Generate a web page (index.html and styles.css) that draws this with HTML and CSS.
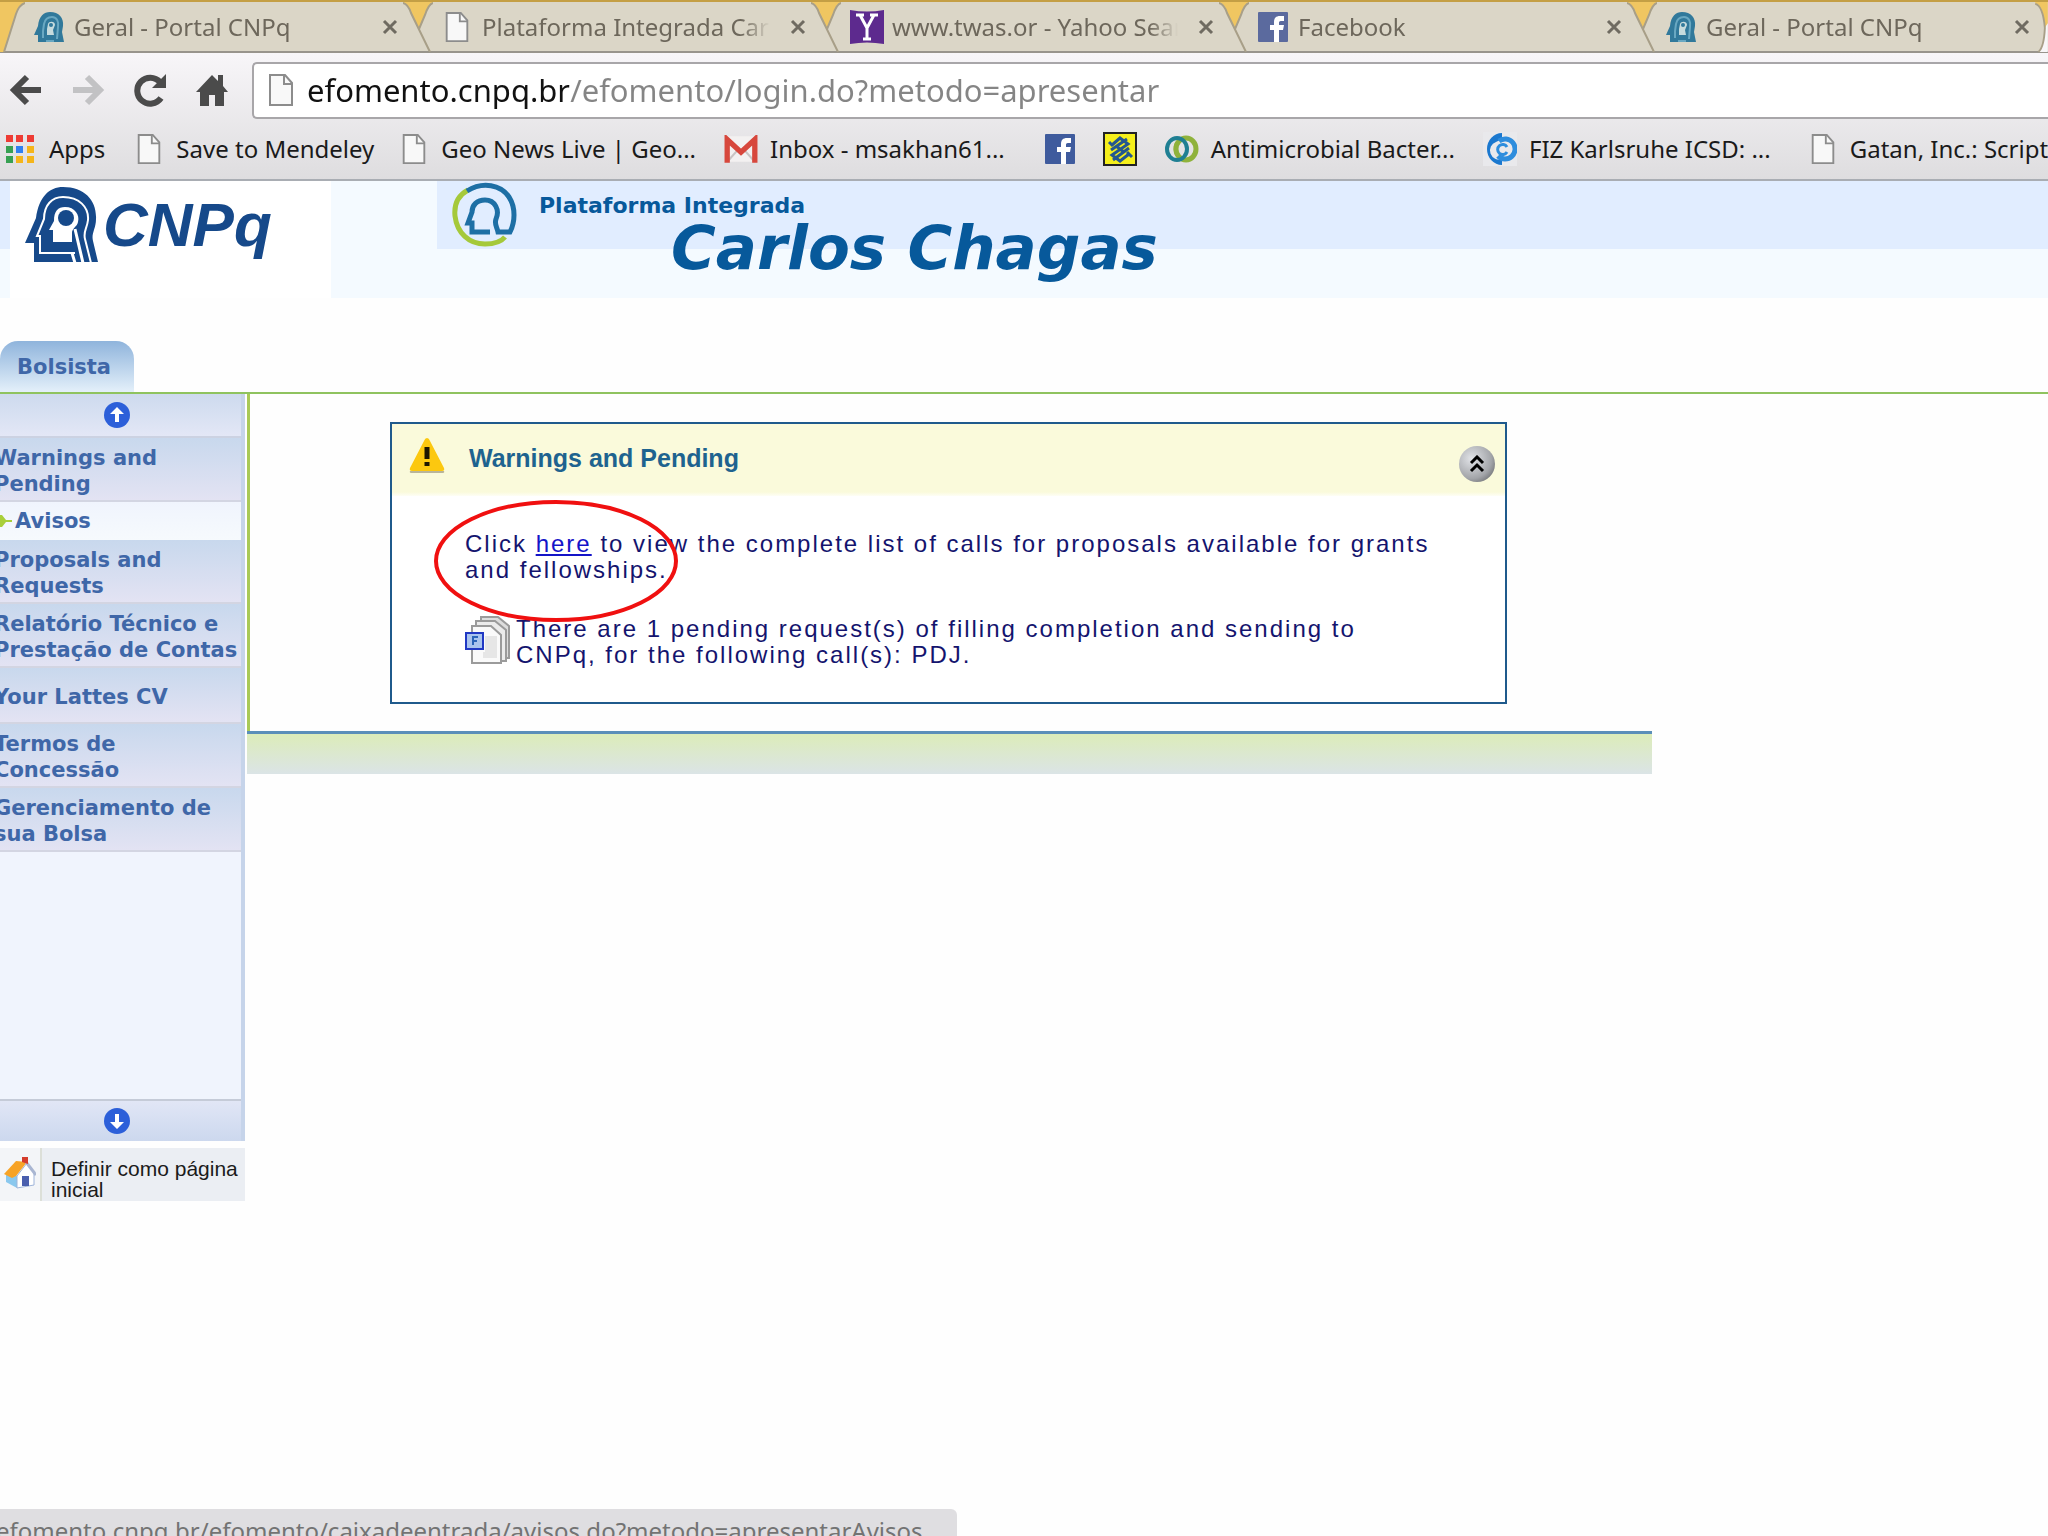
FILE: index.html
```html
<!DOCTYPE html>
<html lang="en">
<head>
    <meta charset="UTF-8">
    <meta name="viewport" content="width=device-width, initial-scale=1.0">
    <title>Plataforma Integrada Carlos Chagas</title>
    <link rel="stylesheet" href="styles.css">
</head>
<body>
    <!-- shared shapes -->
    <svg class="defs" width="0" height="0" aria-hidden="true">
        <symbol id="tab-edge" viewBox="0 0 30 50">
            <path d="M0 0H30V1C26 2 24 7 22 13L16 28L8 11C6 5 4 2 0 1Z" fill="#f0c661"/>
            <path d="M0 1C4 2 6 5 8 11L27 50M30 1C26 2 24 7 22 13L16 27" fill="none" stroke="#a89f88" stroke-width="2"/>
        </symbol>
        <symbol id="file" viewBox="0 0 24 32">
            <path d="M1 1H16L23 9V31H1Z" fill="#f8f8f8" stroke="#8c8c8c" stroke-width="2"/>
            <path d="M15 1V10H23" fill="none" stroke="#8c8c8c" stroke-width="2"/>
        </symbol>
        <symbol id="head" viewBox="0 0 74 76">
            <path d="M9 75V56H0L11 31C14 10 24 0 38 0C60 0 72 14 71 32C71 42 66 46 68 54L73 75Z" fill="currentColor"/>
            <path d="M50 66H15V49H12L19 32C19 18 27 10 38 10C54 10 64 20 63 33C62 42 58 44 60 52L66 76" fill="none" stroke="#fff" stroke-width="2"/>
            <path d="M47 58H22V48" fill="none" stroke="currentColor" stroke-width="4"/>
            <path d="M28 55V43H24L29 34C29 24 33 20 40 20C50 20 55 28 53 35C52 40 47 41 47 46V55Z" fill="#fff"/>
            <circle cx="41" cy="31" r="8" fill="currentColor"/>
            <path d="M50 42L58 76M47 66L50 76" fill="none" stroke="#fff" stroke-width="3"/>
        </symbol>
        <symbol id="head-small" viewBox="0 0 30 30">
            <path d="M4 30V23H0L4 14C5 4 10 0 16 0C25 0 30 6 29 14L28 20L30 30Z" fill="#31799b"/>
            <path d="M9 26V19L10 12C11 7 14 5 18 5C23 5 25 10 24 15L23 27M12 29H20" fill="none" stroke="#69a8c2" stroke-width="2"/>
            <path d="M13 23V17L14 12C15 9 21 9 21 13L19 18L20 23Z" fill="#c6dbdd"/>
            <circle cx="17" cy="13" r="2" fill="#31799b"/>
        </symbol>
        <symbol id="facebook" viewBox="0 0 30 30">
            <rect width="30" height="30" rx="1" fill="currentColor"/>
            <path d="M16 30V18H12V13H16V10C16 6 18 4 22 4H26V9H23C21 9 21 10 21 11V13H26L25 18H21V30Z" fill="#fff"/>
        </symbol>
        <symbol id="close" viewBox="0 0 16 16">
            <path d="M2 2L14 14M14 2L2 14" stroke="#6f6b61" stroke-width="3"/>
        </symbol>
    </svg>

    <header class="browser">
        <nav class="tabs">
            <div class="tab">
                <svg class="tab-edge" viewBox="0 0 30 50">
                    <path d="M0 0H30V1Q24 3 21 12L9 50H0Z" fill="#f0c661"/>
                    <path d="M30 1Q24 3 21 12L9 50" fill="none" stroke="#a89f88" stroke-width="2"/>
                </svg>
                <svg class="favicon"><use href="#head-small"/></svg>
                <span class="tab-title">Geral - Portal CNPq</span>
                <button class="tab-close" aria-label="Close tab"><svg><use href="#close"/></svg></button>
            </div>
            <div class="tab">
                <svg class="tab-edge"><use href="#tab-edge"/></svg>
                <svg class="favicon"><use href="#file"/></svg>
                <span class="tab-title">Plataforma Integrada Carl</span>
                <button class="tab-close" aria-label="Close tab"><svg><use href="#close"/></svg></button>
            </div>
            <div class="tab">
                <svg class="tab-edge"><use href="#tab-edge"/></svg>
                <svg class="favicon yahoo" viewBox="0 0 34 34">
                    <path d="M0 0Q17 3 34 0V34Q17 31 0 34Z" fill="#5d2a8e"/>
                    <path d="M6 5H14M20 5H28M10 5L17 18L24 5M17 17V29M13 29H21" fill="none" stroke="#fff" stroke-width="3"/>
                </svg>
                <span class="tab-title">www.twas.or - Yahoo Sear</span>
                <button class="tab-close" aria-label="Close tab"><svg><use href="#close"/></svg></button>
            </div>
            <div class="tab">
                <svg class="tab-edge"><use href="#tab-edge"/></svg>
                <svg class="favicon fb"><use href="#facebook"/></svg>
                <span class="tab-title">Facebook</span>
                <button class="tab-close" aria-label="Close tab"><svg><use href="#close"/></svg></button>
            </div>
            <div class="tab">
                <svg class="tab-edge"><use href="#tab-edge"/></svg>
                <svg class="favicon"><use href="#head-small"/></svg>
                <span class="tab-title">Geral - Portal CNPq</span>
                <button class="tab-close" aria-label="Close tab"><svg><use href="#close"/></svg></button>
            </div>
            <svg class="tabs-end" viewBox="0 0 13 52">
                <path d="M0 0H13V22L10 27Q8 4 0 2Z" fill="#f0c661"/>
                <path d="M10 27L13 22V52H3Q10 45 10 27Z" fill="#f8f6f8"/>
                <path d="M0 2Q8 4 10 27Q9 48 3 52" fill="none" stroke="#a89f88" stroke-width="2"/>
            </svg>
        </nav>

        <div class="toolbar">
            <button class="tool" aria-label="Back">
                <svg viewBox="0 0 34 34"><path d="M18 4L5 17L18 30M6 17H32" fill="none" stroke="#4b4b4b" stroke-width="6"/></svg>
            </button>
            <button class="tool" aria-label="Forward" disabled>
                <svg viewBox="0 0 34 34"><path d="M16 4L29 17L16 30M28 17H2" fill="none" stroke="#c2c2c4" stroke-width="6"/></svg>
            </button>
            <button class="tool" aria-label="Reload">
                <svg viewBox="0 0 34 34"><path d="M27 9A13 13 0 1 0 28 25" fill="none" stroke="#4b4b4b" stroke-width="6"/><path d="M33 1V15H19Z" fill="#4b4b4b"/></svg>
            </button>
            <button class="tool" aria-label="Home">
                <svg viewBox="0 0 34 34"><path d="M17 2L1 19H5V33H14V22H20V33H29V19H33L28 13V2H23V8Z" fill="#4b4b4b"/></svg>
            </button>
            <div class="omnibox">
                <svg class="page-icon"><use href="#file"/></svg>
                <input class="url" type="text" aria-label="Address" value="efomento.cnpq.br/efomento/login.do?metodo=apresentar">
            </div>
        </div>

        <nav class="bookmarks">
            <a class="bookmark" href="#">
                <svg class="bm-icon" viewBox="0 0 28 28">
                    <path d="M0 0h7v7H0zM10 0h7v7h-7zM21 0h7v7h-7z" fill="#ee3b34"/>
                    <path d="M0 11h7v7H0zM0 21h7v7H0z" fill="#37a052"/>
                    <path d="M10 11h7v7h-7z" fill="#2f7ff0"/>
                    <path d="M21 11h7v7h-7zM10 21h7v7h-7zM21 21h7v7h-7z" fill="#f5b51a"/>
                </svg>
                Apps
            </a>
            <a class="bookmark" href="#"><svg class="bm-page"><use href="#file"/></svg>Save to Mendeley</a>
            <a class="bookmark" href="#"><svg class="bm-page"><use href="#file"/></svg>Geo News Live | Geo...</a>
            <a class="bookmark tight" href="#">
                <svg class="bm-icon wide" viewBox="0 0 32 26">
                    <path d="M3 1H29V25H3Z" fill="#f3f1f1"/>
                    <path d="M3 25L12 15M29 25L20 15" stroke="#c9c4c4" stroke-width="2"/>
                    <path d="M3 26V4L16 16L29 4V26" fill="none" stroke="#d7473c" stroke-width="5"/>
                </svg>
                Inbox - msakhan61...
            </a>
            <a class="bookmark spaced" href="#" aria-label="Facebook"><svg class="bm-fb"><use href="#facebook"/></svg></a>
            <a class="bookmark" href="#" aria-label="Banco do Brasil">
                <svg class="bm-icon wide tall" viewBox="0 0 34 34">
                    <rect x="1" y="1" width="32" height="32" fill="#f5ef1b" stroke="#222" stroke-width="2"/>
                    <path d="M9 13L17 6L25 12L9 23L17 29L26 22M8 18L24 7M10 28L26 16M6 10L10 14M24 20L29 25M13 14L21 20" fill="none" stroke="#24578f" stroke-width="3"/>
                </svg>
            </a>
            <a class="bookmark tight" href="#">
                <svg class="bm-icon wide" viewBox="0 0 34 28">
                    <ellipse cx="21" cy="14" rx="10" ry="11" fill="none" stroke="#8fb23c" stroke-width="5"/>
                    <ellipse cx="12" cy="14" rx="10" ry="11" fill="none" stroke="#1f7f93" stroke-width="4"/>
                    <path d="M13 21A10 11 0 0 1 12 8" fill="none" stroke="#8fb23c" stroke-width="4"/>
                </svg>
                Antimicrobial Bacter...
            </a>
            <a class="bookmark tight" href="#">
                <svg class="bm-icon wide tall" viewBox="0 0 34 34">
                    <rect width="34" height="34" fill="#e9e9ec"/>
                    <path d="M19 1A15 16 0 0 0 19 33V27A9 9 0 0 1 13 10L19 7Z" fill="#1b78cf"/>
                    <path d="M16 9A10 10 0 1 1 15 24" fill="none" stroke="#2e8ddd" stroke-width="5"/>
                    <path d="M24 15A5 5 0 1 0 24 20" fill="none" stroke="#2e8ddd" stroke-width="3"/>
                </svg>
                FIZ Karlsruhe ICSD: ...
            </a>
            <a class="bookmark spaced" href="#"><svg class="bm-page"><use href="#file"/></svg>Gatan, Inc.: Scripting</a>
        </nav>
    </header>

    <div class="banner">
        <div class="banner-logo">
            <svg class="cnpq-mark"><use href="#head"/></svg>
            <span class="cnpq-name">CNPq</span>
        </div>
        <div class="banner-title">
            <svg class="platform-mark" viewBox="0 0 66 66">
                <path d="M17 8C6 14 3 24 4 34C6 51 18 62 34 62C43 62 50 60 54 55" fill="none" stroke="#a5c93a" stroke-width="5"/>
                <path d="M16 9C32-1 50 3 58 15C65 26 64 40 59 50H47C46 45 43 42 45 37C49 28 44 18 34 18C26 18 21 23 21 30L17 41H21V50H39" fill="none" stroke="#1d6fa5" stroke-width="5"/>
            </svg>
            <div class="platform">
                <span class="platform-top">Plataforma Integrada</span>
                <span class="platform-name">Carlos Chagas</span>
            </div>
        </div>
    </div>

    <div class="profile-tabs">
        <a class="profile-tab" href="#">Bolsista</a>
    </div>

    <div class="layout">
        <aside>
            <nav class="menu">
                <button class="scroll" aria-label="Scroll up">
                    <svg viewBox="0 0 26 26"><circle cx="13" cy="13" r="13" fill="#2c5fd9"/><path d="M13 5L20 12H15V20H11V12H6Z" fill="#fff"/></svg>
                </button>
                <a class="menu-item" href="#">Warnings and<br>Pending</a>
                <a class="menu-item current" href="#">
                    <svg class="bullet" viewBox="0 0 18 12"><path d="M0 0H8L12 5H18V7H12L8 12H0Z" fill="#a9cf3b"/></svg>Avisos
                </a>
                <a class="menu-item" href="#">Proposals and<br>Requests</a>
                <a class="menu-item" href="#">Relatório Técnico e<br>Prestação de Contas</a>
                <a class="menu-item single" href="#">Your Lattes CV</a>
                <a class="menu-item" href="#">Termos de<br>Concessão</a>
                <a class="menu-item" href="#">Gerenciamento de<br>sua Bolsa</a>
                <div class="menu-space"></div>
                <button class="scroll down" aria-label="Scroll down">
                    <svg viewBox="0 0 26 26"><circle cx="13" cy="13" r="13" fill="#2c5fd9"/><path d="M13 21L20 14H15V6H11V14H6Z" fill="#fff"/></svg>
                </button>
            </nav>
            <a class="homepage" href="#">
                <span class="homepage-icon">
                    <svg viewBox="0 0 32 32">
                        <path d="M2 17V25L13 31L15 19Z" fill="#8ac8ee"/>
                        <path d="M13 19V31L30 28V16L23 6Z" fill="#fff" stroke="#9eb4da" stroke-width="1"/>
                        <path d="M0 17L12 4L23 5L12 19L8 21Z" fill="#f7a326"/>
                        <path d="M22 5L32 18" stroke="#a9b6d2" stroke-width="3"/>
                        <path d="M18 0H24V7L18 5Z" fill="#d43c2c"/>
                        <path d="M18 19H25V29H18Z" fill="#4a5fae"/>
                    </svg>
                </span>
                <span class="homepage-text">Definir como página<br>inicial</span>
            </a>
        </aside>

        <main>
            <div class="content">
                <section class="notice">
                    <div class="notice-head">
                        <svg class="warning" viewBox="0 0 36 36">
                            <path d="M1 34Q0 36 3 36H33Q36 36 35 34Z" fill="#b9b59a"/>
                            <path d="M18 1Q20 1 21 4L35 31Q36 34 33 34H3Q0 34 1 31L15 4Q16 1 18 1Z" fill="#fcc80f"/>
                            <path d="M18 10V22M18 25V29" stroke="#1c1600" stroke-width="5"/>
                        </svg>
                        <h2>Warnings and Pending</h2>
                        <button class="collapse" aria-label="Collapse">
                            <svg viewBox="0 0 16 18"><path d="M2 8L8 2L14 8M2 16L8 10L14 16" fill="none" stroke="#000" stroke-width="3"/></svg>
                        </button>
                    </div>
                    <div class="notice-body">
                        <p>Click <a href="#">here</a> to view the complete list of calls for proposals available for grants<br>and fellowships.</p>
                        <div class="pending">
                            <svg class="docs" viewBox="0 0 46 48">
                                <path d="M16 1H33L44 10V42H16Z" fill="#ddd" stroke="#9b9b9b" stroke-width="2"/>
                                <path d="M11 5H30L41 14V45H11Z" fill="#ececec" stroke="#9b9b9b" stroke-width="2"/>
                                <path d="M7 10H26L36 19V47H7Z" fill="#fafafa" stroke="#9b9b9b" stroke-width="2"/>
                                <path d="M20 20H32V42H18V36H20Z" fill="#e6e6e6"/>
                                <rect x="1" y="17" width="17" height="16" fill="#a9c4ee" stroke="#2038c4" stroke-width="2"/>
                                <path d="M8 29V21H13M8 25H12" fill="none" stroke="#2a64b8" stroke-width="2"/>
                            </svg>
                            <p>There are 1 pending request(s) of filling completion and sending to<br>CNPq, for the following call(s): PDJ.</p>
                        </div>
                        <svg class="marker" viewBox="0 0 244 122">
                            <ellipse cx="122" cy="61" rx="120" ry="59" fill="none" stroke="#f01010" stroke-width="4"/>
                        </svg>
                    </div>
                </section>
            </div>
            <div class="footer-bar"></div>
        </main>
    </div>

    <div class="status">efomento.cnpq.br/efomento/caixadeentrada/avisos.do?metodo=apresentarAvisos</div>
</body>
</html>
```
FILE: styles.css
```css
* {
    box-sizing: border-box;
}

body {
    margin: 0;
    min-height: 100vh;
    background-color: #fefefe;
    font-family: "Liberation Sans", Arial, sans-serif;
    overflow: hidden;
}

a {
    text-decoration: none;
}

button {
    padding: 0;
    border: none;
    background: none;
    cursor: pointer;
}

svg {
    display: block;
    flex: none;
}

.defs {
    position: absolute;
}

/* browser */
.browser {
    font-family: "Noto Sans", "Open Sans", sans-serif;
    border-bottom: 2px solid #a9adb3;
    background: linear-gradient(#f8f6f9 52px, #dedddf);
}

.tabs {
    display: flex;
    height: 53px;
    margin-left: -5px;
    background-color: #dbd6c7;
    border-top: 2px solid #c49f45;
    border-bottom: 2px solid #98948c;
}

.tab {
    display: flex;
    flex: 1;
    align-items: center;
    min-width: 0;
    padding-right: 5px;
}

.tab-edge {
    width: 30px;
    height: 50px;
    margin-right: 9px;
}

.favicon {
    width: 30px;
    height: 30px;
    margin-right: 10px;
}

.favicon.yahoo {
    width: 34px;
    height: 34px;
    margin-right: 8px;
}

.favicon.fb {
    color: #5b6a9e;
}

.tab-title {
    flex: 1;
    overflow: hidden;
    white-space: nowrap;
    font-size: 24px;
    color: #6d675b;
    -webkit-mask-image: linear-gradient(to right, #000 90%, transparent);
    mask-image: linear-gradient(to right, #000 90%, transparent);
}

.tab-close {
    margin-left: 20px;
}

.tab-close svg {
    width: 16px;
    height: 16px;
}

.tabs-end {
    width: 13px;
    height: 50px;
}

.toolbar {
    display: flex;
    align-items: center;
    height: 74px;
    padding-left: 9px;
}

.tool {
    width: 34px;
    margin-right: 28px;
}

.tool svg {
    width: 34px;
    height: 34px;
}

.omnibox {
    display: flex;
    flex: 1;
    align-items: center;
    height: 57px;
    margin-left: -5px;
    padding-left: 15px;
    border: 2px solid #a8a6a9;
    border-right: none;
    border-radius: 5px 0 0 5px;
    background-color: #fff;
}

.page-icon {
    width: 24px;
    height: 32px;
    margin-right: 14px;
}

/* the host part of the address is black, the path is grey */
.url {
    flex: 1;
    border: none;
    padding: 0;
    outline: none;
    font-family: inherit;
    font-size: 31px;
    color: transparent;
    background: linear-gradient(to right, #111 262px, #858585 262px);
    -webkit-background-clip: text;
    background-clip: text;
}

.bookmarks {
    display: flex;
    align-items: center;
    height: 52px;
    padding: 0 0 9px 6px;
    gap: 28px;
    overflow: hidden;
}

.bookmark {
    display: flex;
    align-items: center;
    gap: 15px;
    white-space: nowrap;
    font-size: 24px;
    color: #1a1a1a;
}

.bookmark:first-child {
    margin-right: 4px;
}

.bookmark.tight {
    gap: 12px;
}

.bookmark.spaced {
    margin-left: 12px;
}

.bm-icon {
    width: 28px;
    height: 28px;
}

.bm-icon.wide {
    width: 34px;
}

.bm-icon.tall {
    height: 34px;
}

.bm-page {
    width: 24px;
    height: 30px;
}

.bm-fb {
    width: 30px;
    height: 30px;
    color: #3f5b9d;
}

/* site */
.banner {
    display: flex;
    height: 117px;
    background: linear-gradient(#e1edff 68px, #f4faff 68px);
}

.banner-logo {
    display: flex;
    align-items: flex-start;
    width: 321px;
    margin-left: 10px;
    padding: 6px 0 0 15px;
    background-color: #fff;
}

.cnpq-mark {
    width: 74px;
    height: 76px;
    color: #16498a;
}

.cnpq-name {
    margin-left: 4px;
    line-height: 76px;
    font-size: 62px;
    font-weight: bold;
    font-style: italic;
    color: #16498a;
}

.banner-title {
    display: flex;
    flex: 1;
    align-items: flex-start;
    padding-left: 120px;
    background: linear-gradient(#f4faff, #f4faff) no-repeat 0 0 / 106px 100%;
}

.platform-mark {
    width: 66px;
    height: 66px;
    margin-top: 1px;
}

.platform {
    display: flex;
    flex-direction: column;
    padding: 10px 0 0 22px;
    font-family: "DejaVu Sans", Verdana, sans-serif;
    font-weight: bold;
    color: #07599b;
}

.platform-top {
    font-size: 22px;
    line-height: 30px;
}

.platform-name {
    padding-left: 132px;
    font-size: 61px;
    line-height: 54px;
    font-style: italic;
}

.profile-tabs {
    display: flex;
    align-items: flex-end;
    height: 96px;
    border-bottom: 2px solid #8fc35f;
}

.profile-tab {
    width: 134px;
    height: 51px;
    padding-left: 17px;
    border-radius: 18px 18px 0 0;
    background: linear-gradient(#8fb4dc, #e4f0fa);
    font-family: "DejaVu Sans", Verdana, sans-serif;
    font-size: 21px;
    font-weight: bold;
    line-height: 52px;
    color: #3f67a8;
}

.layout {
    display: flex;
    align-items: flex-start;
}

/* free space right of the page body */
.layout::after {
    content: "";
    flex: 22;
}

aside {
    width: 247px;
    flex: none;
}

.menu {
    display: flex;
    flex-direction: column;
    width: 245px;
    border-right: 4px solid #c6d4ea;
    background-color: #f0f4fd;
}

.scroll {
    display: flex;
    align-items: center;
    height: 44px;
    padding-left: 104px;
    background: linear-gradient(#cddaee, #e3e7f6);
    border-bottom: 2px solid #ccd2e2;
}

.scroll.down {
    height: 42px;
    background: linear-gradient(#e1e6f6, #ccd8ee);
    border-top: 2px solid #c5cbd8;
    border-bottom: none;
}

.scroll svg {
    width: 26px;
    height: 26px;
}

.menu-item {
    height: 64px;
    margin-left: -6px;
    padding-top: 7px;
    background: linear-gradient(#c8d8ed, #e3e3f3);
    border-bottom: 2px solid #d3d5e2;
    font-family: "DejaVu Sans", Verdana, sans-serif;
    font-size: 21px;
    font-weight: bold;
    line-height: 26px;
    white-space: nowrap;
    color: #3f67a8;
}

.menu-item.current {
    display: flex;
    align-items: center;
    height: 38px;
    padding-top: 0;
    background: linear-gradient(#f0f4fd, #f6fafd);
    border-bottom: none;
}

.menu-item.single {
    height: 56px;
    padding-top: 16px;
}

.bullet {
    width: 18px;
    height: 12px;
    margin-right: 3px;
}

.menu-space {
    height: 247px;
}

.homepage {
    display: flex;
    width: 245px;
    height: 53px;
    margin-top: 7px;
    background-color: #ebeef3;
    color: #1b1b1b;
}

.homepage-icon {
    width: 42px;
    padding: 9px 0 0 4px;
    border-right: 2px solid #dcdfd8;
    background-color: #f3f5f8;
}

.homepage-icon svg {
    width: 32px;
    height: 32px;
}

.homepage-text {
    padding: 10px 0 0 9px;
    font-size: 21px;
    line-height: 21px;
    white-space: nowrap;
}

main {
    flex: 78;
}

.content {
    padding: 28px 145px 27px 140px;
    border-left: 3px solid #a9c957;
}

.notice {
    border: 2px solid #1f5a8c;
    background-color: #fff;
}

.notice-head {
    display: flex;
    align-items: center;
    height: 72px;
    padding: 0 10px 0 17px;
    background: linear-gradient(#fafadb 68px, #fefef5);
}

.warning {
    width: 36px;
    height: 36px;
    margin-bottom: 10px;
}

h2 {
    flex: 1;
    margin: 0 0 4px 24px;
    font-size: 25px;
    color: #1e638f;
}

.collapse {
    display: flex;
    align-items: center;
    justify-content: center;
    width: 36px;
    height: 36px;
    margin-top: 8px;
    border-radius: 50%;
    background: radial-gradient(circle at 35% 35%, #e2e4e8, #a3a5a9 60%, #4e4f52);
}

.collapse svg {
    width: 16px;
    height: 18px;
}

.notice-body {
    position: relative;
    padding: 35px 0 34px 73px;
    font-size: 24px;
    line-height: 26px;
    letter-spacing: 2px;
    white-space: nowrap;
    color: #14146e;
}

.notice-body p {
    margin: 0;
}

.notice-body p a {
    color: #1414c8;
    text-decoration: underline;
}

.pending {
    display: flex;
    margin-top: 33px;
}

.docs {
    width: 46px;
    height: 48px;
    margin-right: 5px;
}

/* hand drawn ring around the link */
.marker {
    position: absolute;
    top: 4px;
    left: 42px;
    width: 244px;
    height: 122px;
}

.footer-bar {
    height: 43px;
    border-top: 3px solid #5b8fb9;
    background: linear-gradient(#dcecb9, #dbe4e6);
}

.status {
    position: fixed;
    left: 0;
    bottom: 0;
    height: 27px;
    padding: 6px 34px 0 0;
    border-radius: 0 6px 0 0;
    overflow: hidden;
    background-color: #dfdee1;
    font-family: "Noto Sans", "Open Sans", sans-serif;
    font-size: 24px;
    line-height: 32px;
    text-indent: -4px;
    white-space: nowrap;
    color: #737373;
}
```
